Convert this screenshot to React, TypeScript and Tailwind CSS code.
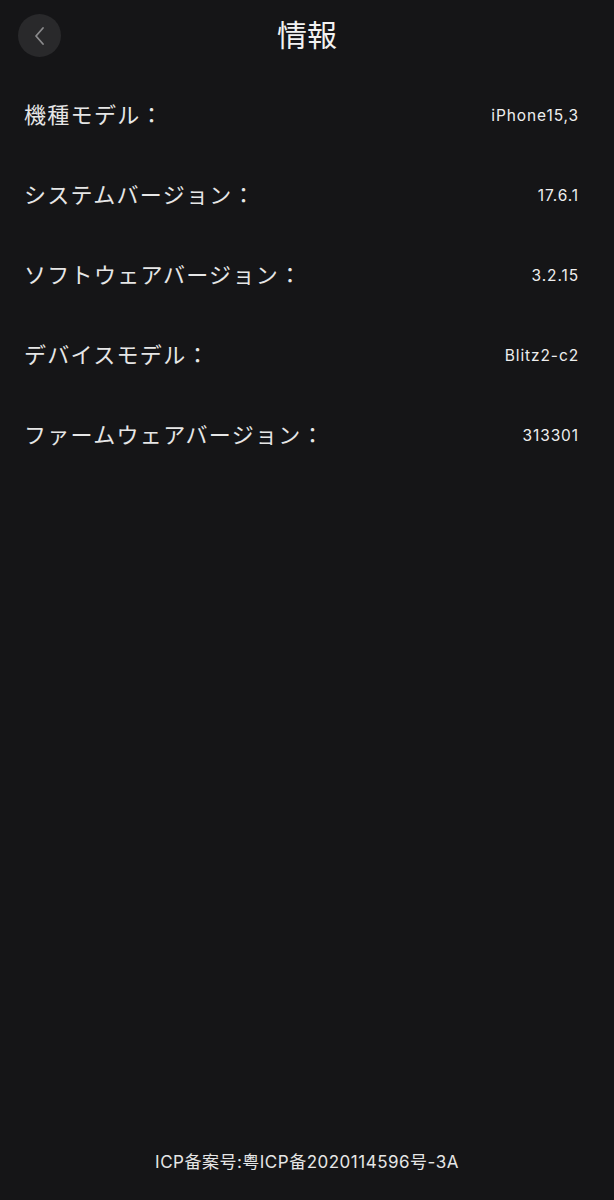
import React from "react";

const rows = [
  { label: "機種モデル：", value: "iPhone15,3" },
  { label: "システムバージョン：", value: "17.6.1" },
  { label: "ソフトウェアバージョン：", value: "3.2.15" },
  { label: "デバイスモデル：", value: "Blitz2-c2" },
  { label: "ファームウェアバージョン：", value: "313301" },
];

export default function App() {
  return (
    <div
      className="flex h-[1200px] w-full flex-col bg-[#151517] text-white"
      style={{ fontFamily: '"Noto Sans CJK JP", "Noto Sans", sans-serif' }}
    >
      {/* Header */}
      <div className="relative flex h-[70px] items-center justify-center pb-[4px]">
        <button className="absolute left-[18px] top-[14px] flex h-[43px] w-[43px] items-center justify-center rounded-full bg-[#29292b] text-[#8a8a8c]">
          <svg width="14" height="22" viewBox="0 0 14 22" fill="none">
            <path d="M10 3 L3 11 L10 19" stroke="currentColor" strokeWidth="1.8" strokeLinecap="round" strokeLinejoin="round" />
          </svg>
        </button>
        <h1 className="text-[30px] font-normal leading-none text-[#f2f2f2]">情報</h1>
      </div>

      {/* Rows */}
      <div className="flex flex-col pt-[3px]">
        {rows.map((r) => (
          <div key={r.label} className="flex h-[80px] items-center justify-between pl-[24px] pr-[35px]">
            <span className="text-[22px] leading-none tracking-[1.3px] text-[#e6e6e6]">{r.label}</span>
            <span
              className="pt-[5px] text-[15.5px] leading-none tracking-[0.9px] text-[#eeeeee]"
              style={{ fontFamily: '"Inter", "Roboto", sans-serif' }}
            >
              {r.value}
            </span>
          </div>
        ))}
      </div>

      <div className="flex-1" />

      <div className="flex h-[46px] items-start justify-center">
        <span
          className="text-[17px] leading-none tracking-[0.5px] text-[#e6e6e6]"
          style={{ fontFamily: '"Inter", "Noto Sans CJK SC", sans-serif' }}
        >
          ICP备案号:粤ICP备2020114596号-3A
        </span>
      </div>
    </div>
  );
}
